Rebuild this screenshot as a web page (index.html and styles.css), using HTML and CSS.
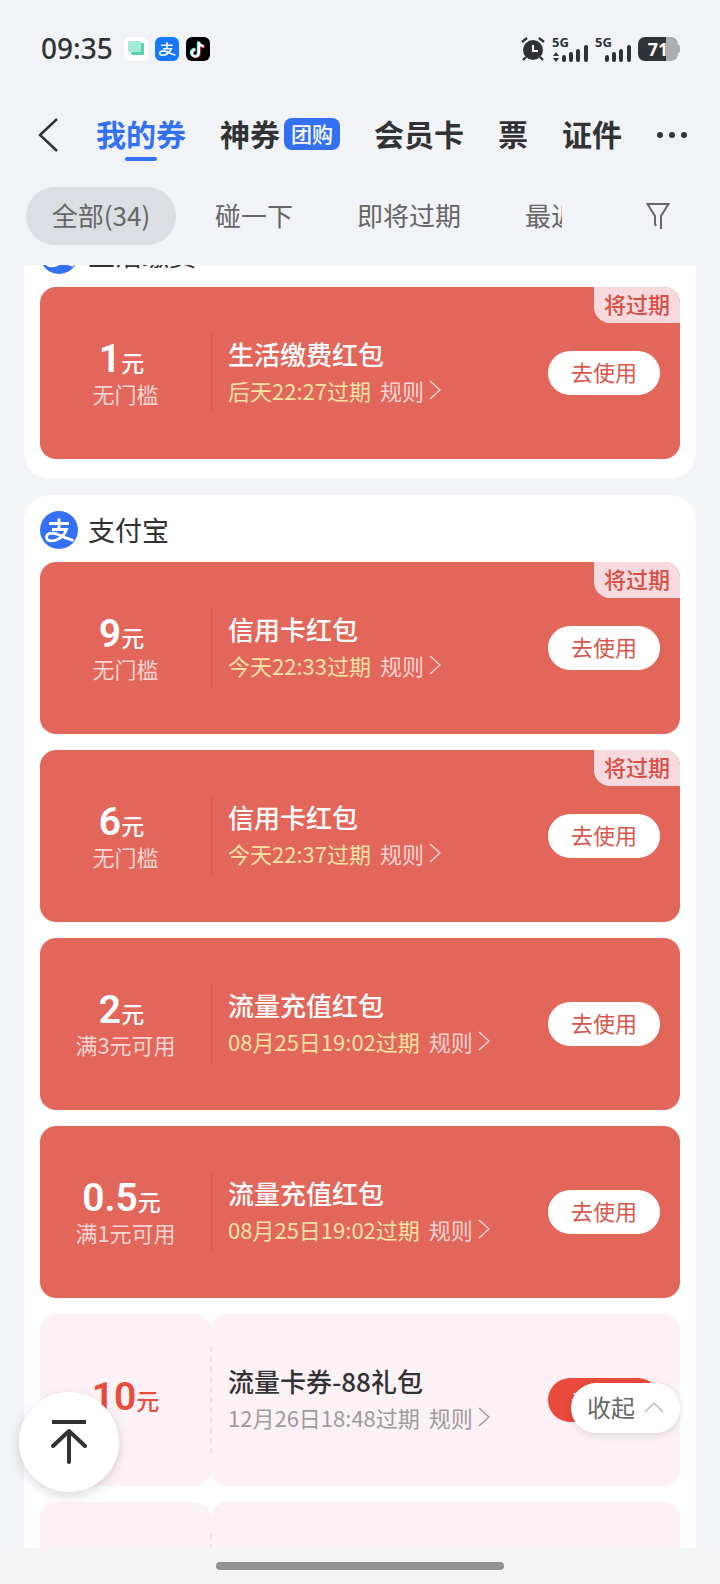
FILE: index.html
```html
<!DOCTYPE html>
<html lang="zh-CN">
<head>
    <meta charset="UTF-8">
    <meta name="viewport" content="width=device-width, initial-scale=1.0">
    <title>我的券</title>
    <link rel="stylesheet" href="styles.css">
</head>
<body>
    <!-- shared icons -->
    <svg class="defs" width="0" height="0" aria-hidden="true">
        <symbol id="zhi" viewBox="0 0 38 38">
            <path d="M9 12.500h20M19 7.500v11M12 18.500h14.500c-1.500 4-4 7-7.500 9.200-5 3.300-12.500 2.800-12.500-1.500 0-4 6-5 11.500-2.700 5 2 10 4.500 15.500 6" fill="none" stroke="#fff" stroke-width="2.800"/>
        </symbol>
        <symbol id="arrow" viewBox="0 0 12 20">
            <path d="M1 1l10 9-10 9" fill="none" stroke="currentColor" stroke-width="1.500"/>
        </symbol>
    </svg>

    <div class="screen">
        <div class="status">
            <span class="time">09:35</span>
            <svg class="app" viewBox="0 0 24 24">
                <rect width="24" height="24" rx="6" fill="#fff"/>
                <rect x="7" y="6" width="13" height="12" rx="1" fill="#5fd0b0"/>
                <rect x="4" y="4" width="13" height="11" rx="1" fill="#a5ead6"/>
            </svg>
            <svg class="app" viewBox="0 0 24 24">
                <rect width="24" height="24" rx="6" fill="#1677ff"/>
                <use href="#zhi" x="1" y="1" width="22" height="22"/>
            </svg>
            <svg class="app" viewBox="0 0 24 24">
                <rect width="24" height="24" rx="6" fill="#000"/>
                <g fill="none" stroke-width="2.400">
                    <path d="M12 4.500v11a3.500 3.500 0 1 1-3.500-3.500M12 4.500c.3 2.500 2 4 5 4.200" stroke="#25f4ee"/>
                    <path d="M13.500 5.500v11a3.500 3.500 0 1 1-3.500-3.500M13.500 5.500c.3 2.500 2 4 5 4.200" stroke="#fe2c55"/>
                    <path d="M12.800 5v11a3.500 3.500 0 1 1-3.500-3.500M12.800 5c.3 2.500 2 4 5 4.200" stroke="#fff"/>
                </g>
            </svg>
            <span class="grow"></span>
            <svg class="alarm" viewBox="0 0 24 24">
                <circle cx="12" cy="13" r="10" fill="#303234"/>
                <path d="M1 5l5-4M23 5l-5-4M5 20l-3 3M19 20l3 3" stroke="#303234" stroke-width="2.400" fill="none"/>
                <path d="M12 8v6h5" stroke="#fff" stroke-width="2" fill="none"/>
            </svg>
            <span class="signal">
                <b>5G</b>
                <svg viewBox="0 0 36 17">
                    <path d="M4 7l3 4H1zM4 17l3-4H1z" fill="#303234"/>
                    <path d="M12 12v3M19 9v6M26 6v9M34 2v13" stroke="#303234" stroke-width="4" stroke-linecap="round"/>
                </svg>
            </span>
            <span class="signal">
                <b>5G</b>
                <svg viewBox="0 0 36 17">
                    <path d="M12 12v3M19 9v6M26 6v9M34 2v13" stroke="#303234" stroke-width="4" stroke-linecap="round"/>
                </svg>
            </span>
            <span class="battery">71</span>
        </div>

        <nav class="tabs">
            <button class="back" aria-label="返回">
                <svg viewBox="0 0 20 34"><path d="M19 1L2 17l17 16" fill="none" stroke="#303234" stroke-width="2.500"/></svg>
            </button>
            <a class="tab active" href="#">我的券</a>
            <a class="tab" href="#">神券<span class="badge">团购</span></a>
            <a class="tab" href="#">会员卡</a>
            <a class="tab" href="#">票</a>
            <a class="tab" href="#">证件</a>
            <button class="more" aria-label="更多">
                <svg viewBox="0 0 32 8"><g fill="#303234"><circle cx="4" cy="4" r="3"/><circle cx="16" cy="4" r="3"/><circle cx="28" cy="4" r="3"/></g></svg>
            </button>
        </nav>

        <div class="filters">
            <div class="chips">
                <button class="chip on">全部(34)</button>
                <button class="chip">碰一下</button>
                <button class="chip">即将过期</button>
                <button class="chip">最近</button>
            </div>
            <button class="funnel" aria-label="筛选">
                <svg viewBox="0 0 24 28"><path d="M10 24l-1-2v-8L1.500 2h21L15 14v13" fill="none" stroke="#666" stroke-width="2"/></svg>
            </button>
        </div>

        <main class="list">
            <section class="group">
                <h2 class="shop"><svg class="logo" viewBox="0 0 38 38"><circle cx="19" cy="19" r="19" fill="#3370f6"/><use href="#zhi" width="38" height="38"/></svg>生活缴费</h2>
                <article class="coupon">
                    <div class="price"><p class="amount"><b>1</b>元</p><p class="limit">无门槛</p></div>
                    <div class="info">
                        <h3>生活缴费红包</h3>
                        <p class="date">后天22:27过期<a class="rule" href="#">规则<svg><use href="#arrow"/></svg></a></p>
                    </div>
                    <button class="use">去使用</button>
                    <span class="tag">将过期</span>
                </article>
            </section>

            <section class="group">
                <h2 class="shop"><svg class="logo" viewBox="0 0 38 38"><circle cx="19" cy="19" r="19" fill="#3370f6"/><use href="#zhi" width="38" height="38"/></svg>支付宝</h2>
                <article class="coupon">
                    <div class="price"><p class="amount"><b>9</b>元</p><p class="limit">无门槛</p></div>
                    <div class="info">
                        <h3>信用卡红包</h3>
                        <p class="date">今天22:33过期<a class="rule" href="#">规则<svg><use href="#arrow"/></svg></a></p>
                    </div>
                    <button class="use">去使用</button>
                    <span class="tag">将过期</span>
                </article>
                <article class="coupon">
                    <div class="price"><p class="amount"><b>6</b>元</p><p class="limit">无门槛</p></div>
                    <div class="info">
                        <h3>信用卡红包</h3>
                        <p class="date">今天22:37过期<a class="rule" href="#">规则<svg><use href="#arrow"/></svg></a></p>
                    </div>
                    <button class="use">去使用</button>
                    <span class="tag">将过期</span>
                </article>
                <article class="coupon">
                    <div class="price"><p class="amount"><b>2</b>元</p><p class="limit">满3元可用</p></div>
                    <div class="info">
                        <h3>流量充值红包</h3>
                        <p class="date">08月25日19:02过期<a class="rule" href="#">规则<svg><use href="#arrow"/></svg></a></p>
                    </div>
                    <button class="use">去使用</button>
                </article>
                <article class="coupon">
                    <div class="price"><p class="amount"><b>0.5</b>元</p><p class="limit">满1元可用</p></div>
                    <div class="info">
                        <h3>流量充值红包</h3>
                        <p class="date">08月25日19:02过期<a class="rule" href="#">规则<svg><use href="#arrow"/></svg></a></p>
                    </div>
                    <button class="use">去使用</button>
                </article>
                <article class="coupon light">
                    <div class="price"><p class="amount"><b>10</b>元</p></div>
                    <div class="info">
                        <h3>流量卡券-88礼包</h3>
                        <p class="date">12月26日18:48过期<a class="rule" href="#">规则<svg><use href="#arrow"/></svg></a></p>
                    </div>
                    <button class="use">去使用</button>
                </article>
                <article class="coupon light">
                    <div class="price"></div>
                    <div class="info"></div>
                </article>
            </section>
        </main>

        <div class="homebar"><span></span></div>

        <button class="totop" aria-label="回到顶部">
            <svg viewBox="0 0 36 46"><path d="M1 3h34" stroke="#303234" stroke-width="4"/><path d="M18 43V12M2 27l16-15 16 15" fill="none" stroke="#303234" stroke-width="4" stroke-linejoin="round" stroke-linecap="round"/></svg>
        </button>
        <button class="fold">收起<svg viewBox="0 0 20 12"><path d="M1 11l9-9 9 9" fill="none" stroke="#bbb" stroke-width="1.500"/></svg></button>
    </div>
</body>
</html>
```
FILE: styles.css
```css
* {
    box-sizing: border-box;
}

body {
    margin: 0;
    background: #f1f3f7;
    color: #303234;
    font-family: "Noto Sans CJK SC", sans-serif;
}

h2, h3, p {
    margin: 0;
}

a {
    color: inherit;
    text-decoration: none;
}

button {
    padding: 0;
    border: none;
    background: none;
    color: inherit;
    font: inherit;
    white-space: nowrap;
}

svg {
    display: block;
    flex: none;
}

.defs {
    position: absolute;
}

.screen {
    position: relative;
    display: flex;
    flex-direction: column;
    height: 100vh;
    overflow: hidden;
}

/* status bar */
.status {
    display: flex;
    align-items: center;
    gap: 7px;
    height: 98px;
    padding: 0 42px 0 41px;
}

.time {
    margin-right: 4px;
    padding-bottom: 2px;
    font-family: "Noto Sans", sans-serif;
    font-size: 28px;
    font-weight: 500;
    line-height: 40px;
}

.app {
    width: 24px;
    height: 24px;
}

.grow {
    flex: 1;
}

.alarm {
    width: 24px;
    height: 24px;
}

.signal {
    display: flex;
    flex-direction: column;
    width: 36px;
}

.signal b {
    font-family: "Noto Sans", sans-serif;
    font-size: 13px;
    line-height: 10px;
}

.signal svg {
    width: 36px;
    height: 17px;
    margin-top: -2px;
}

.battery {
    position: relative;
    width: 40px;
    height: 24px;
    border-radius: 7px;
    background: linear-gradient(to right, #303234 28px, #acadb0 28px);
    color: #fff;
    font: bold 18px/24px "Noto Sans", sans-serif;
    text-align: center;
}

.battery::after {
    content: "";
    position: absolute;
    top: 8px;
    right: -2px;
    width: 2px;
    height: 8px;
    border-radius: 0 2px 2px 0;
    background: #acadb0;
}

/* tabs */
.tabs {
    display: flex;
    align-items: center;
    gap: 34px;
    height: 74px;
    padding: 0 32px 0 38px;
}

.back {
    margin-right: 4px;
}

.back svg {
    width: 20px;
    height: 34px;
}

.tab {
    position: relative;
    display: flex;
    align-items: center;
    gap: 4px;
    padding-bottom: 4px;
    font-size: 30px;
    font-weight: bold;
    line-height: 44px;
    white-space: nowrap;
}

.tab.active {
    color: #3370f6;
}

.tab.active::after {
    content: "";
    position: absolute;
    bottom: -2px;
    left: 50%;
    width: 32px;
    height: 4px;
    margin-left: -16px;
    border-radius: 2px;
    background: #3370f6;
}

.badge {
    margin-top: 2px;
    padding: 0 7px 2px;
    border-radius: 8px;
    background: #3370f6;
    color: #fff;
    font-size: 21px;
    font-weight: 500;
    line-height: 30px;
}

.more svg {
    width: 32px;
    height: 8px;
}

/* filters */
.filters {
    display: flex;
    align-items: center;
    justify-content: space-between;
    height: 93px;
    padding: 0 50px 6px 26px;
}

.chips {
    display: flex;
    flex: 1;
    gap: 14px;
    min-width: 0;
    margin-right: 84px;
    overflow: hidden;
}

.chip {
    flex: none;
    padding: 0 25px 2px;
    border-radius: 29px;
    color: #666;
    font-size: 26px;
    line-height: 56px;
}

.chip.on {
    min-width: 150px;
    background: #dbdee2;
}

.funnel svg {
    width: 24px;
    height: 28px;
}

/* coupon list */
.list {
    flex: 1;
    min-height: 0;
    padding: 0 24px;
    overflow: hidden;
}

.group {
    display: flex;
    flex-direction: column;
    gap: 16px;
    margin-bottom: 16px;
    padding: 0 16px 20px;
    border-radius: 26px;
    background: #fff;
}

/* the list is scrolled past the first heading */
.group:first-child {
    margin-top: -45px;
}

.shop {
    display: flex;
    align-items: center;
    gap: 10px;
    height: 51px;
    padding-top: 18px;
    font-size: 27px;
    font-weight: normal;
}

.logo {
    width: 38px;
    height: 38px;
}

.coupon {
    position: relative;
    display: flex;
    align-items: center;
    height: 172px;
    padding-right: 20px;
    border-radius: 16px;
    background: #e2665a;
    color: #fff;
}

.price {
    width: 171px;
    text-align: center;
}

.amount {
    padding-right: 8px;
    font-size: 23px;
    font-weight: 500;
    line-height: 36px;
}

.amount b {
    font-family: Roboto, sans-serif;
    font-size: 39px;
    font-weight: 600;
}

.limit {
    color: #f8d5d2;
    font-size: 22px;
    line-height: 26px;
}

.info {
    display: flex;
    flex: 1;
    flex-direction: column;
    justify-content: center;
    height: 80px;
    padding: 0 0 2px 16px;
    border-left: 1px solid #d4584e;
}

.info h3 {
    font-size: 26px;
    font-weight: 500;
    line-height: 36px;
}

.date {
    display: flex;
    align-items: center;
    gap: 9px;
    color: #fbe3a4;
    font-size: 22px;
    line-height: 36px;
}

.rule {
    display: flex;
    align-items: center;
    gap: 5px;
    color: #f8d5d2;
}

.rule svg {
    width: 12px;
    height: 20px;
}

.use {
    width: 112px;
    height: 44px;
    padding-bottom: 4px;
    border-radius: 22px;
    background: #fff;
    color: #d9574c;
    font-size: 22px;
    line-height: 40px;
}

.tag {
    position: absolute;
    top: 0;
    right: 0;
    padding: 0 10px 4px;
    border-radius: 0 16px;
    background: #f7dade;
    color: #d84f45;
    font-size: 22px;
    font-weight: 500;
    line-height: 32px;
}

.coupon.light {
    background: none;
    color: #303234;
}

.light .price {
    display: flex;
    align-items: center;
    justify-content: center;
    align-self: stretch;
    border-radius: 16px;
    background: #fcf1f5;
    color: #ea4a3b;
}

.light .amount {
    padding: 0 0 4px;
}

.light .info {
    position: relative;
    align-self: stretch;
    height: auto;
    margin-right: -132px;
    padding-left: 17px;
    border: none;
    border-radius: 16px;
    background: #fcf1f5;
}

.light .info:last-child {
    margin-right: -20px;
}

.light .info::before {
    content: "";
    position: absolute;
    top: 32px;
    bottom: 32px;
    left: -1px;
    border-left: 2px dashed #f0e3e7;
}

.light .date,
.light .rule {
    color: #a09a9c;
}

.light .use {
    position: relative;
    margin-left: 20px;
    background: #ea4a3b;
    color: #fff;
}

.light .info:not(:last-child) {
    margin-right: -152px;
}

/* bottom */
.homebar {
    display: flex;
    justify-content: center;
    height: 36px;
    padding-top: 14px;
    background: #f4f4f4;
}

.homebar span {
    width: 40%;
    height: 8px;
    border-radius: 4px;
    background: #929292;
}

.totop {
    position: absolute;
    bottom: 92px;
    left: 19px;
    display: flex;
    align-items: center;
    justify-content: center;
    width: 100px;
    height: 100px;
    border-radius: 50%;
    background: #fff;
    box-shadow: 0 4px 12px rgba(0, 0, 0, 0.15);
}

.totop svg {
    width: 36px;
    height: 46px;
}

.fold {
    position: absolute;
    right: 40px;
    bottom: 151px;
    display: flex;
    align-items: center;
    gap: 9px;
    padding: 0 16px 2px;
    border-radius: 25px;
    background: #fff;
    color: #666;
    font-size: 24px;
    line-height: 48px;
    box-shadow: 0 2px 8px rgba(0, 0, 0, 0.12);
}

.fold svg {
    width: 20px;
    height: 12px;
}
```
